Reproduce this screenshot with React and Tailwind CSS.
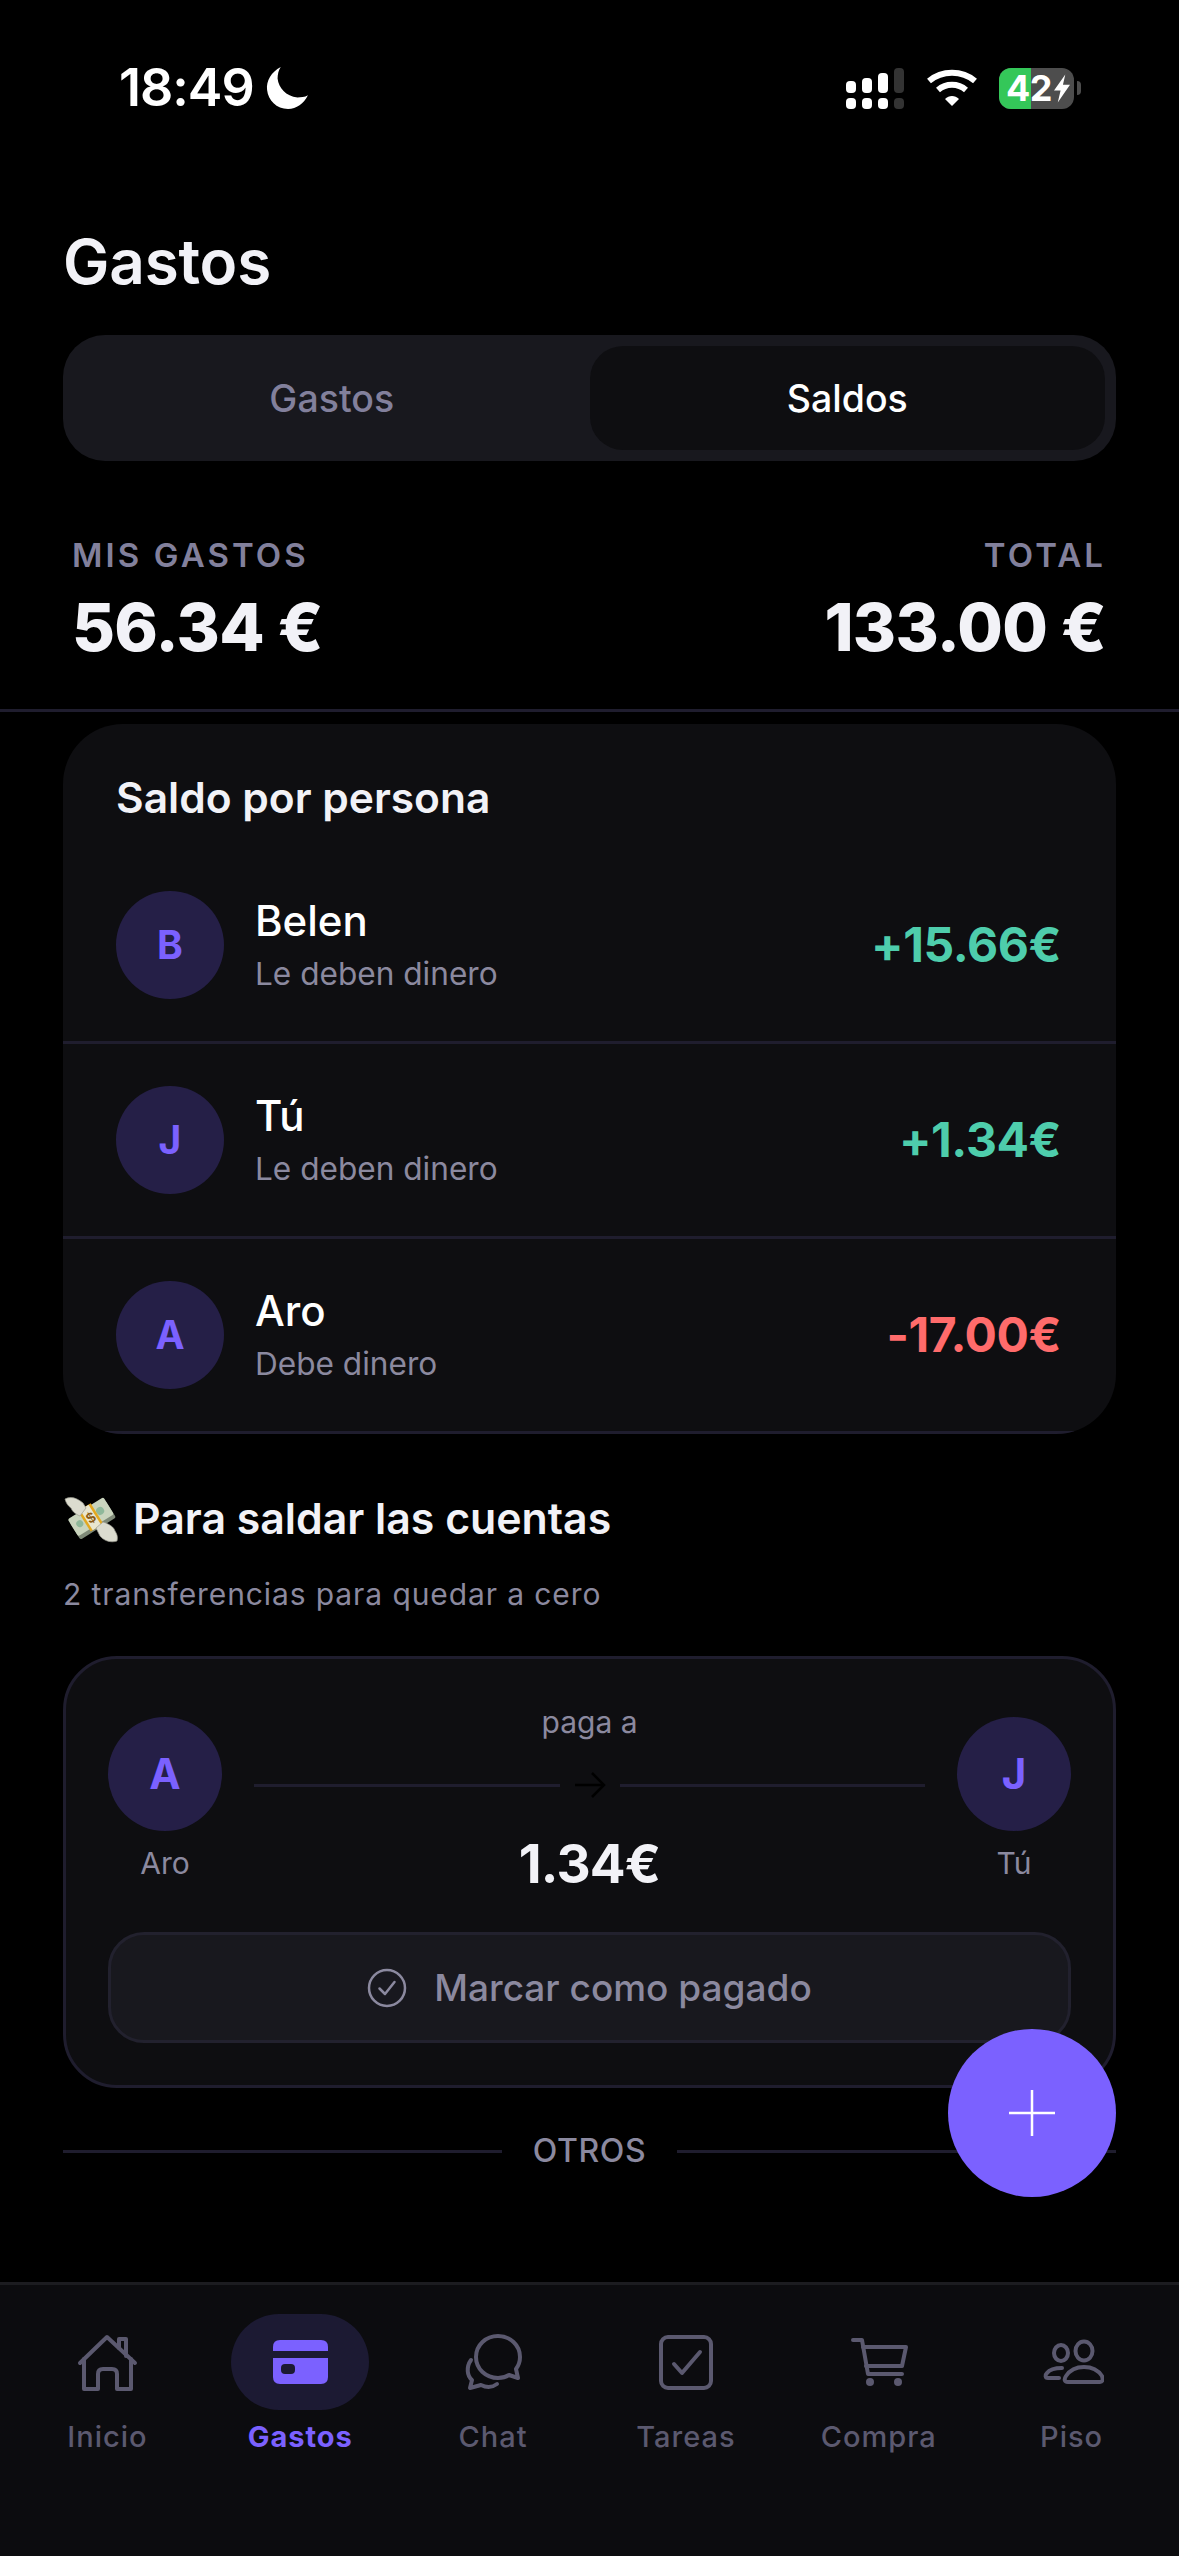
const MUTED = "text-[#8b899f]";

function MoonIcon() {
  return (
    <svg width="44" height="44" viewBox="0 0 42 42" fill="white">
      <path d="M15 1 C6 6 1 14 2 23 C3 33 11 41 22 41 C30 41 37 36 41 28 C38 30 34 30 31 30 C20 29 13 21 12 12 C12 8 13 4 15 1Z" />
    </svg>
  );
}

function Signal() {
  return (
    <svg width="58" height="41" viewBox="0 0 58 41">
      <rect x="0" y="13" width="10" height="12" rx="4" fill="#fff" />
      <rect x="16" y="10" width="10" height="15" rx="4" fill="#fff" />
      <rect x="32" y="5" width="10" height="20" rx="4" fill="#fff" />
      <rect x="48" y="0" width="10" height="25" rx="4" fill="#333" />
      <rect x="0" y="30" width="10" height="11" rx="4" fill="#fff" />
      <rect x="16" y="30" width="10" height="11" rx="4" fill="#fff" />
      <rect x="32" y="30" width="10" height="11" rx="4" fill="#fff" />
      <rect x="48" y="30" width="10" height="11" rx="4" fill="#333" />
    </svg>
  );
}

function Wifi() {
  return (
    <svg width="50" height="38" viewBox="0 0 50 38" fill="none" stroke="#fff" strokeWidth="6">
      <path d="M2 12 C15 1 35 1 48 12" />
      <path d="M11 21 C19 14 31 14 39 21" />
      <path d="M18 30 L25 37 L32 30 C28 26 22 26 18 30Z" fill="#fff" stroke="none" />
    </svg>
  );
}

function Battery() {
  return (
    <div className="flex items-center gap-[3px]">
      <div className="relative flex h-[41px] w-[75px] rounded-[12px] bg-[#4d4d4d]">
        <div className="h-full w-[32px] rounded-l-[12px] bg-[#34c759]" />
        <div className="absolute inset-0 flex items-center pl-[7px] text-[36px] leading-[41px] font-bold tracking-[-0.5px] text-white">
          <span>42</span>
          <svg className="ml-[2px]" width="16" height="29" viewBox="0 0 17 30" fill="#fff">
            <path d="M12 0 L0 17 H7 L4 30 L17 11 H9.5 Z" />
          </svg>
        </div>
      </div>
      <div className="h-[14px] w-[4px] rounded-r-full bg-[#4d4d4d]" />
    </div>
  );
}

function Avatar({ letter, size }) {
  return (
    <div
      className={
        size === "lg"
          ? "flex h-[114px] w-[114px] shrink-0 items-center justify-center rounded-full bg-[#251f47] text-[42px] font-bold text-[#7b61ff]"
          : "flex h-[108px] w-[108px] shrink-0 items-center justify-center rounded-full bg-[#251f47] text-[39px] font-bold text-[#7b61ff]"
      }
    >
      {letter}
    </div>
  );
}

function PersonRow({ letter, name, sub, amount, color }) {
  return (
    <div className="flex h-[195px] items-center border-b-[3px] border-[#1f1d2e] pr-[55px] pl-[53px]">
      <Avatar letter={letter} />
      <div className="ml-[31px] flex flex-1 flex-col">
        <div className="text-[42px] leading-[50px] font-medium text-white">{name}</div>
        <div className={"mt-[8px] text-[31.6px] leading-[40px] " + MUTED}>{sub}</div>
      </div>
      <div className={"text-[48px] font-bold tracking-[-0.4px] " + color}>{amount}</div>
    </div>
  );
}

function MoneyWings() {
  return (
    <svg width="56" height="48" viewBox="0 0 56 48">
      <g transform="rotate(-32 28 24)">
        <rect x="8" y="16" width="42" height="20" rx="2" fill="#7f8a78" />
        <rect x="8" y="12" width="42" height="20" rx="2" fill="#c9d4bd" />
        <circle cx="40" cy="22" r="4" fill="#8fb89a" />
        <circle cx="16" cy="22" r="3.5" fill="#8fb89a" />
        <rect x="21" y="10.5" width="15" height="24" fill="#e3a81f" />
        <rect x="23.5" y="10.5" width="10" height="24" fill="#e9e6cf" />
        <text x="28.5" y="28" textAnchor="middle" fontSize="15" fontWeight="700" fill="#8a5a14" fontFamily="Liberation Sans, sans-serif">$</text>
      </g>
      <path d="M2 4 C8 1 14 3 20 8 L23 13 L17 21 C12 19 9 16 8 13 C5 11 3 8 2 4Z" fill="#dcdccf" stroke="#9c9c90" strokeWidth="0.7" />
      <path d="M54 46 C48 48 41 46 37 41 L33 33 L40 27 C46 29 51 32 52 36 C54 39 55 42 54 46Z" fill="#dcdccf" stroke="#9c9c90" strokeWidth="0.7" />
    </svg>
  );
}

function NavIcon({ name }) {
  const s = { fill: "none", stroke: "#5b596f", strokeWidth: 4, strokeLinecap: "round", strokeLinejoin: "round" };
  if (name === "home")
    return (
      <svg width="64" height="64" viewBox="0 0 64 64" {...s}>
        <path d="M5 33 L32 7 L60 33" />
        <path d="M9 29 V59 H23 V44 Q23 39 28 39 H37 Q42 39 42 44 V59 H56 V29" />
        <path d="M44 18 V9 H51 V26" />
      </svg>
    );
  if (name === "card")
    return (
      <svg width="64" height="64" viewBox="0 0 64 64">
        <path d="M5 21 V17 Q5 10 12 10 H53 Q60 10 60 17 V21 Z" fill="#7b61ff" />
        <path d="M5 28 H60 V47 Q60 54 53 54 H12 Q5 54 5 47 Z" fill="#7b61ff" />
        <rect x="13" y="34" width="14" height="10" rx="4" fill="#1c1a33" />
      </svg>
    );
  if (name === "chat")
    return (
      <svg width="64" height="64" viewBox="0 0 64 64" {...s}>
        <path d="M37 6 C25 6 15 15 15 27 C15 39 25 48 37 48 C41 48 45 47 48 45 L57 48 L55 39 C58 35 59 31 59 27 C59 15 49 6 37 6Z" />
        <path d="M10 30 C5 37 6 46 11 50 L9 58 L20 55 C26 58 32 57 36 54" />
      </svg>
    );
  if (name === "tasks")
    return (
      <svg width="64" height="64" viewBox="0 0 64 64" {...s}>
        <rect x="7" y="7" width="50" height="51" rx="7" />
        <path d="M20 34 L28 43 L46 22" />
      </svg>
    );
  if (name === "cart")
    return (
      <svg width="64" height="64" viewBox="0 0 64 64" {...s}>
        <path d="M6 10 H15 L21 44 H55" />
        <path d="M16 17 H59 L55 36 H19" />
        <circle cx="23" cy="52" r="4" fill="#5b596f" stroke="none" />
        <circle cx="51" cy="52" r="4" fill="#5b596f" stroke="none" />
      </svg>
    );
  return (
    <svg width="64" height="64" viewBox="0 0 64 64" {...s}>
      <ellipse cx="21" cy="23" rx="7" ry="8" />
      <ellipse cx="44" cy="21" rx="8.5" ry="9.5" />
      <path d="M28 52 C24 52 24 49 26 46 C30 40 37 37 44 37 C51 37 58 40 62 46 C63 49 63 52 60 52 Z" />
      <path d="M19 48 H8 C5 48 5 45 7 43 C10 39 15 38 22 38" />
    </svg>
  );
}

const NAV = [
  ["home", "Inicio"],
  ["card", "Gastos"],
  ["chat", "Chat"],
  ["tasks", "Tareas"],
  ["cart", "Compra"],
  ["people", "Piso"],
];

export default function App() {
  return (
    <div className="relative flex h-[2556px] w-[1179px] flex-col overflow-hidden bg-black [font-family:Inter,sans-serif]">
      {/* status bar */}
      <div className="flex h-[176px] shrink-0 items-center justify-between pr-[98px] pl-[119px] text-white">
        <div className="flex items-center gap-[11px]">
          <span className="text-[52px] leading-none font-semibold tracking-[-1px]">18:49</span>
          <MoonIcon />
        </div>
        <div className="flex items-center">
          <Signal />
          <div className="mr-[22px] ml-[23px]">
            <Wifi />
          </div>
          <Battery />
        </div>
      </div>

      {/* header */}
      <div className="shrink-0 px-[63px] pt-[50px]">
        <h1 className="text-[62px] leading-[72px] font-semibold tracking-[-0.2px] text-[#f2f2f7]">Gastos</h1>
        <div className="mt-[37px] grid h-[126px] grid-cols-2 rounded-[42px] bg-[#18181e] p-[11px]">
          <div className="flex items-center justify-center pt-[2px] text-[37.5px] font-medium text-[#82809c]">Gastos</div>
          <div className="flex items-center justify-center rounded-[33px] bg-[#0e0e11] pt-[2px] text-[37.5px] font-medium text-white">
            Saldos
          </div>
        </div>
      </div>

      {/* totals */}
      <div className="flex shrink-0 justify-between border-b-[3px] border-[#1f1d2e] pt-[74px] pr-[73px] pb-[42px] pl-[72px]">
        <div>
          <div className="text-[33px] leading-[40px] font-semibold tracking-[3.1px] text-[#82809c]">MIS GASTOS</div>
          <div className="mt-[12px] text-[66px] leading-[80px] font-extrabold tracking-[-0.7px] text-[#f2f2f7]">56.34 €</div>
        </div>
        <div className="text-right">
          <div className="text-[33px] leading-[40px] font-semibold tracking-[3.1px] text-[#82809c]">TOTAL</div>
          <div className="mt-[12px] text-[66px] leading-[80px] font-extrabold tracking-[-0.7px] text-[#f2f2f7]">133.00 €</div>
        </div>
      </div>

      {/* content */}
      <div className="min-h-0 flex-1 overflow-hidden px-[63px] pt-[12px]">
        <div className="overflow-hidden rounded-[60px] bg-[#0e0e11]">
          <div className="pt-[49px] pb-[26px] pl-[53px] text-[42.5px] leading-[50px] font-semibold text-[#f2f2f7]">
            Saldo por persona
          </div>
          <PersonRow letter="B" name="Belen" sub="Le deben dinero" amount="+15.66€" color="text-[#4ecdac]" />
          <PersonRow letter="J" name="Tú" sub="Le deben dinero" amount="+1.34€" color="text-[#4ecdac]" />
          <PersonRow letter="A" name="Aro" sub="Debe dinero" amount="-17.00€" color="text-[#ff6b6b]" />
        </div>

        <div className="mt-[60px] flex items-center gap-[14px]">
          <MoneyWings />
          <span className="text-[42.8px] leading-[50px] font-semibold text-[#f2f2f7]">Para saldar las cuentas</span>
        </div>
        <div className={"mt-[30px] text-[30px] leading-[40px] tracking-[0.9px] " + MUTED}>
          2 transferencias para quedar a cero
        </div>

        <div className="mt-[42px] rounded-[54px] border-[3px] border-[#1f1d2e] bg-[#0e0e11] px-[42px] pt-[43px] pb-[42px]">
          <div className="flex items-center">
            <div className="flex w-[114px] shrink-0 flex-col items-center">
              <Avatar letter="A" size="lg" />
              <div className={"mt-[12px] text-[30px] leading-[40px] " + MUTED}>Aro</div>
            </div>
            <div className="mx-[32px] flex flex-1 flex-col items-center">
              <div className={"text-[30px] leading-[40px] " + MUTED}>paga a</div>
              <div className="mt-[30px] flex w-full items-center">
                <div className="h-[3px] flex-1 bg-[#1f1d2e]" />
                <div className="flex w-[60px] items-center justify-center">
                  <svg width="32" height="26" viewBox="0 0 32 26" fill="none" stroke="#000" strokeWidth="2.5">
                    <path d="M1 13 H30 M18 1 L30 13 L18 25" />
                  </svg>
                </div>
                <div className="h-[3px] flex-1 bg-[#1f1d2e]" />
              </div>
              <div className="mt-[33px] text-[53px] leading-[66px] font-bold tracking-[-0.8px] text-[#f2f2f7]">1.34€</div>
            </div>
            <div className="flex w-[114px] shrink-0 flex-col items-center">
              <Avatar letter="J" size="lg" />
              <div className={"mt-[12px] text-[30px] leading-[40px] " + MUTED}>Tú</div>
            </div>
          </div>
          <div className="mt-[35px] flex h-[111px] items-center justify-center gap-[27px] rounded-[36px] border-[3px] border-[#22212e] bg-[#18181e]">
            <svg width="40" height="40" viewBox="0 0 40 40" fill="none" stroke="#8b899f" strokeWidth="2.5" strokeLinecap="round" strokeLinejoin="round">
              <circle cx="20" cy="20" r="18" />
              <path d="M12.5 20.5 L18 26 L27.5 14" />
            </svg>
            <span className="text-[37px] font-medium text-[#8b899f]">Marcar como pagado</span>
          </div>
        </div>

        <div className="mt-[43px] flex items-center gap-[31px]">
          <div className="h-[3px] flex-1 bg-[#1f1d2e]" />
          <span className="text-[32px] leading-[40px] font-medium tracking-[0.6px] text-[#8b899f]">OTROS</span>
          <div className="h-[3px] flex-1 bg-[#1f1d2e]" />
        </div>
      </div>

      {/* nav */}
      <div className="grid h-[274px] shrink-0 grid-cols-6 border-t-[3px] border-[#1c1c20] bg-[#0c0c0f] px-[11px] pt-[29px]">
        {NAV.map(([icon, label]) => {
          const active = icon === "card";
          return (
            <div key={label} className="flex flex-col items-center">
              <div
                className={
                  active
                    ? "flex h-[96px] w-[138px] items-center justify-center rounded-[48px] bg-[#1c1a33]"
                    : "flex h-[96px] w-[138px] items-center justify-center"
                }
              >
                <NavIcon name={icon} />
              </div>
              <div
                className={
                  active
                    ? "mt-[9px] text-[29px] leading-[36px] font-bold tracking-[1px] text-[#7b61ff]"
                    : "mt-[9px] text-[29px] leading-[36px] font-medium tracking-[1px] text-[#5b596f]"
                }
              >
                {label}
              </div>
            </div>
          );
        })}
      </div>

      {/* FAB */}
      <div className="absolute right-[63px] bottom-[359px] flex h-[168px] w-[168px] items-center justify-center rounded-full bg-[#7b61ff]">
        <svg width="46" height="46" viewBox="0 0 46 46" stroke="#fff" strokeWidth="2.5">
          <path d="M23 0 V46 M0 23 H46" />
        </svg>
      </div>
    </div>
  );
}
